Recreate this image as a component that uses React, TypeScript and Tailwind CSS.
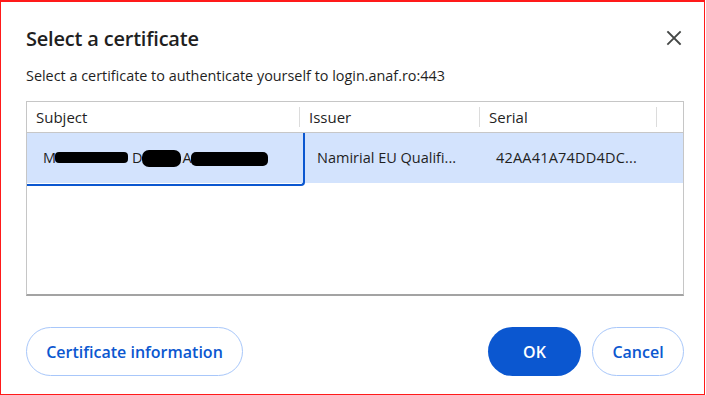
import React from "react";

function CloseIcon() {
  return (
    <svg width="16" height="16" viewBox="0 0 16 16" fill="none">
      <path d="M2 2 L14 14 M14 2 L2 14" stroke="#444746" strokeWidth="1.8" strokeLinecap="square" />
    </svg>
  );
}

export default function App() {
  const font = { fontFamily: '"Open Sans", "Noto Sans", sans-serif' };
  return (
    <div className="w-[706px] h-[395px] bg-white">
      <div
        className="w-[705px] h-[395px] border border-[#ff1a1a] border-t-2 bg-white flex flex-col pl-[25px] pr-[20px] text-[#1f1f1f]"
        style={font}
      >
        <div className="flex items-center justify-between h-[60px] pt-[13px]">
          <h1 className="text-[20px] font-semibold tracking-[-0.2px] text-[#1f1f1f]">Select a certificate</h1>
          <button className="mr-[2px] mt-[-2px] text-[#444746]">
            <CloseIcon />
          </button>
        </div>
        <div className="text-[14.4px] h-[26px] flex items-center mt-[1px] text-[#1f1f1f]">
          Select a certificate to authenticate yourself to login.anaf.ro:443
        </div>
        <div className="mt-[12px] w-[658px] h-[195px] border border-[#c6c6c6] border-b-2 border-b-[#a3a3a3] overflow-hidden flex flex-col">
          <div className="flex h-[31px] shrink-0 border-b border-[#c7c7c7] text-[15px] text-[#1f1f1f]">
            <div className="w-[272px] pl-[9px] flex items-center">Subject</div>
            <div className="w-px my-[5px] bg-[#dcdcdc]" />
            <div className="w-[179px] pl-[9px] flex items-center">Issuer</div>
            <div className="w-px my-[5px] bg-[#dcdcdc]" />
            <div className="w-[176px] pl-[9px] flex items-center">Serial</div>
            <div className="w-px my-[5px] bg-[#dcdcdc]" />
            <div className="flex-1" />
          </div>
          <div className="flex h-[50px] shrink-0 bg-[#d3e3fd] text-[14.5px] text-[#1f1f1f]">
            <div className="relative w-[274px] pl-[16px] flex items-center">
              <span>M</span>
              <span className="inline-block w-[73px] h-[11px] bg-black rounded-[4px] ml-[-1px] mt-[-1px]" />
              <span className="ml-[4px]">D</span>
              <span className="inline-block w-[39px] h-[17px] bg-black rounded-[7px] ml-[-1px] mt-[1px]" />
              <span className="ml-[2px]">A</span>
              <span className="inline-block w-[77px] h-[14px] bg-black rounded-[5px] ml-[-1px] mt-[2px]" />
              <div className="absolute left-[-4px] top-0 right-[-4px] bottom-[-3px] border-r-2 border-b-2 border-[#0b57d0] rounded-br-[4px] pointer-events-none" />
            </div>
            <div className="w-[180px] pl-[16px] flex items-center">Namirial EU Qualifi...</div>
            <div className="w-[176px] pl-[15px] flex items-center tracking-[0.2px]">42AA41A74DD4DC...</div>
            <div className="flex-1" />
          </div>
          <div className="flex-1" />
        </div>
        <div className="flex items-center mt-[31px]">
          <button className="h-[49px] w-[217px] whitespace-nowrap rounded-full border border-[#a8c7fa] text-[#0b57d0] text-[16px] font-semibold">
            Certificate information
          </button>
          <div className="flex-1" />
          <button className="h-[49px] w-[93px] rounded-full bg-[#0b57d0] text-white text-[16px] font-semibold">OK</button>
          <button className="ml-[11px] h-[49px] w-[92px] rounded-full border border-[#a8c7fa] text-[#0b57d0] text-[16px] font-semibold">
            Cancel
          </button>
        </div>
      </div>
    </div>
  );
}
